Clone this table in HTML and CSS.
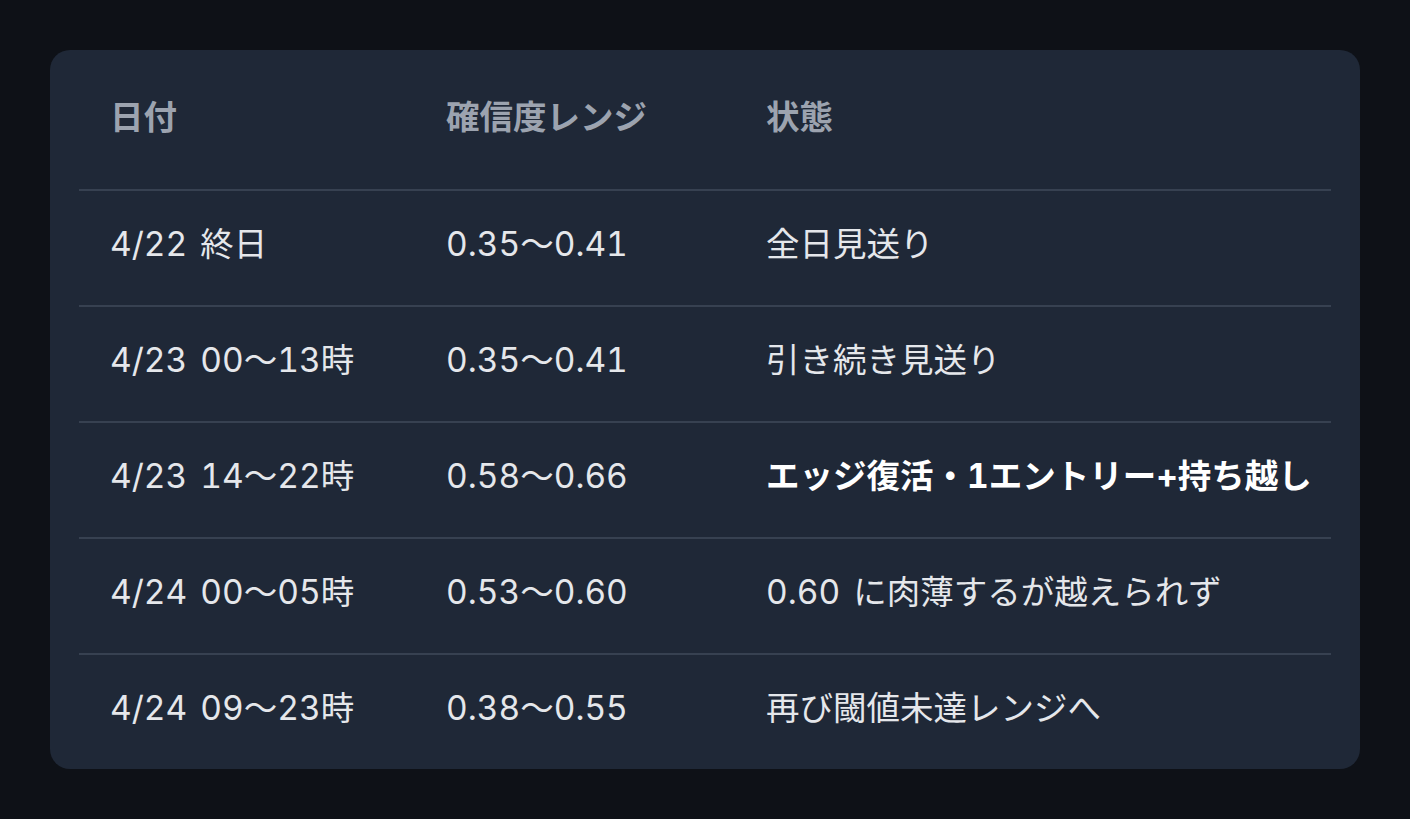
FILE: index.html
```html
<!DOCTYPE html>
<html lang="ja">
<head>
<meta charset="utf-8">
<link rel="stylesheet" href="styles.css">
</head>
<body>
<div class="card">
  <table class="tbl">
    <thead>
      <tr>
        <th class="c1">日付</th>
        <th class="c2">確信度レンジ</th>
        <th class="c3">状態</th>
      </tr>
    </thead>
    <tbody>
      <tr><td>4/22 終日</td><td>0.35〜0.41</td><td>全日見送り</td></tr>
      <tr><td>4/23 00〜13時</td><td>0.35〜0.41</td><td>引き続き見送り</td></tr>
      <tr><td>4/23 14〜22時</td><td>0.58〜0.66</td><td class="strong">エッジ復活・1エントリー+持ち越し</td></tr>
      <tr><td>4/24 00〜05時</td><td>0.53〜0.60</td><td>0.60 に肉薄するが越えられず</td></tr>
      <tr><td>4/24 09〜23時</td><td>0.38〜0.55</td><td>再び閾値未達レンジへ</td></tr>
    </tbody>
  </table>
</div>
</body>
</html>
```
FILE: styles.css
```css
html, body {
  margin: 0;
  padding: 0;
  background: #0e1117;
}
body {
  padding: 50px;
  font-family: Inter, "Noto Sans CJK JP", sans-serif;
  font-variant-numeric: tabular-nums;
}
.card {
  background: #1f2837;
  border-radius: 20px;
  padding: 0 29px;
  overflow: hidden;
}
.tbl {
  width: 100%;
  border-collapse: collapse;
  table-layout: fixed;
}
.tbl th, .tbl td {
  text-align: left;
  font-size: 33.5px;
  line-height: 48px;
  padding-left: 31px;
  white-space: nowrap;
  word-spacing: 4px;
}
.tbl th {
  color: #9ca3af;
  font-weight: 700;
  padding-top: 43px;
  padding-bottom: 48px;
}
.c1 { width: 304px; }
.c2 { width: 288px; }
.tbl td {
  color: #e5e7eb;
  font-weight: 400;
  padding-top: 29px;
  padding-bottom: 37px;
}
.tbl tbody tr {
  border-top: 2px solid #374151;
}
.tbl td.strong {
  color: #ffffff;
  font-weight: 700;
}
```
